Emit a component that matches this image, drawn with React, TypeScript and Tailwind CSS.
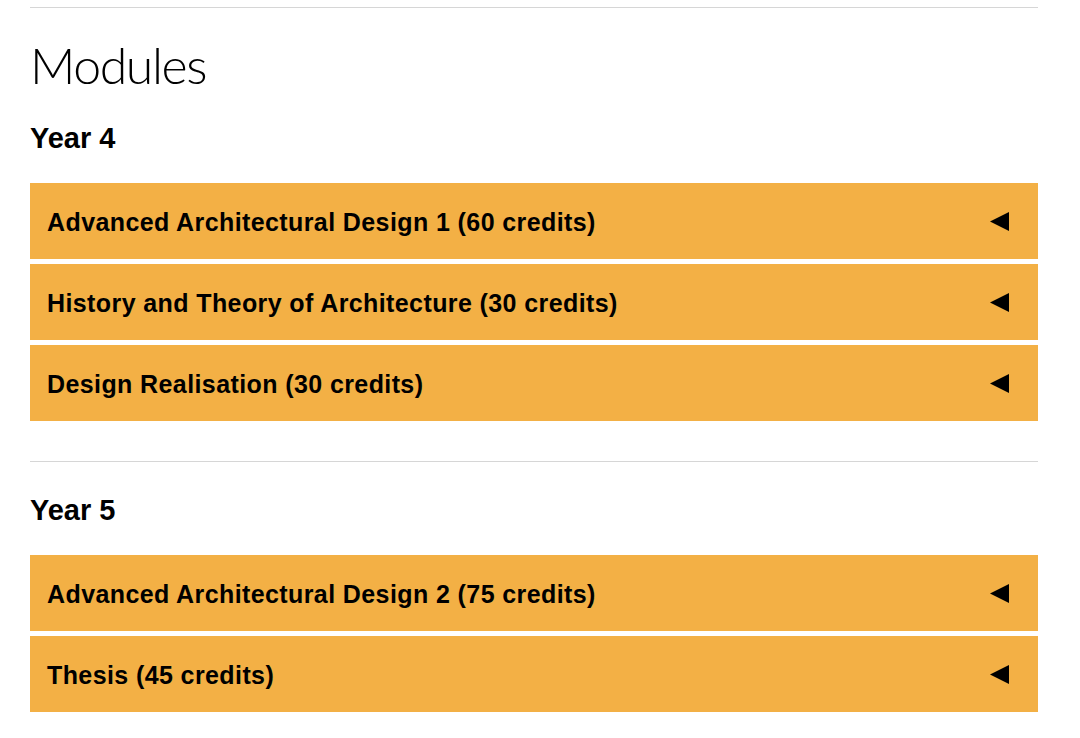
import React from "react";

type Module = { title: string };

const years: { label: string; modules: Module[] }[] = [
  {
    label: "Year 4",
    modules: [
      { title: "Advanced Architectural Design 1 (60 credits)" },
      { title: "History and Theory of Architecture (30 credits)" },
      { title: "Design Realisation (30 credits)" },
    ],
  },
  {
    label: "Year 5",
    modules: [
      { title: "Advanced Architectural Design 2 (75 credits)" },
      { title: "Thesis (45 credits)" },
    ],
  },
];

function Triangle() {
  return (
    <svg width="19" height="19" viewBox="0 0 19 19" className="shrink-0">
      <polygon points="19,0 19,19 0,9.5" fill="#000" />
    </svg>
  );
}

function ModuleRow({ title }: Module) {
  return (
    <div className="h-[76px] bg-[#f3b045] flex items-center justify-between pl-[17px] pr-[29px]">
      <span className="text-[25px] leading-[28px] font-bold tracking-[0.4px] text-black pt-[2px]">{title}</span>
      <Triangle />
    </div>
  );
}

export default function App() {
  return (
    <div className="min-h-[738px] bg-white" style={{ fontFamily: '"Liberation Sans", Arial, sans-serif' }}>
      <div className="ml-[30px] w-[1008px] pt-[7px]">
        <div className="h-px bg-[#d6d6d6]" />
        <h2
          className="mt-[32px] text-[50px] leading-[50px] font-light tracking-[-1.4px] text-black"
          style={{ fontFamily: 'Lato, "Liberation Sans", sans-serif' }}
        >
          Modules
        </h2>
        {years.map((year, i) => (
          <section key={year.label}>
            {i > 0 && <div className="mt-[40px] h-px bg-[#d6d6d6]" />}
            <h3 className="mt-[31px] text-[29px] leading-[34px] font-bold text-black">
              {year.label}
            </h3>
            <div className="mt-[28px] flex flex-col gap-[5px]">
              {year.modules.map((m) => (
                <ModuleRow key={m.title} title={m.title} />
              ))}
            </div>
          </section>
        ))}
      </div>
    </div>
  );
}
